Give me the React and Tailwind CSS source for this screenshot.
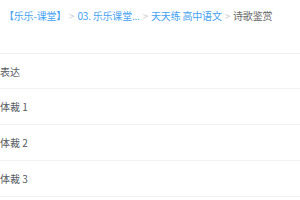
export default function App() {
  const font = { fontFamily: '"Noto Sans CJK SC", "Noto Sans", sans-serif' };
  const rows = ["表达", "体裁 1", "体裁 2", "体裁 3"];
  return (
    <div className="w-[300px] h-[200px] bg-white overflow-hidden" style={font}>
      <div className="h-[54px] border-b border-[#f0f0f5]">
        <div className="flex items-center h-[30px] pl-[4px] text-[10px] whitespace-nowrap tracking-[-0.2px]">
          <span className="text-[#44a2f2]">【乐乐-课堂】</span>
          <span className="text-[#cccccc] mx-[3px]">&gt;</span>
          <span className="text-[#44a2f2]">03. 乐乐课堂...</span>
          <span className="text-[#cccccc] mx-[3px]">&gt;</span>
          <span className="text-[#44a2f2]">天天练 高中语文</span>
          <span className="text-[#cccccc] mx-[3px]">&gt;</span>
          <span className="text-[#666666]">诗歌鉴赏</span>
        </div>
      </div>
      {rows.map((r, i) => (
        <div
          key={r}
          className={`flex items-center border-b border-[#f0f0f5] text-[10px] text-[#555a60] ${i === 0 ? "h-[35px]" : "h-[36px]"}`}
        >
          {r}
        </div>
      ))}
    </div>
  );
}
